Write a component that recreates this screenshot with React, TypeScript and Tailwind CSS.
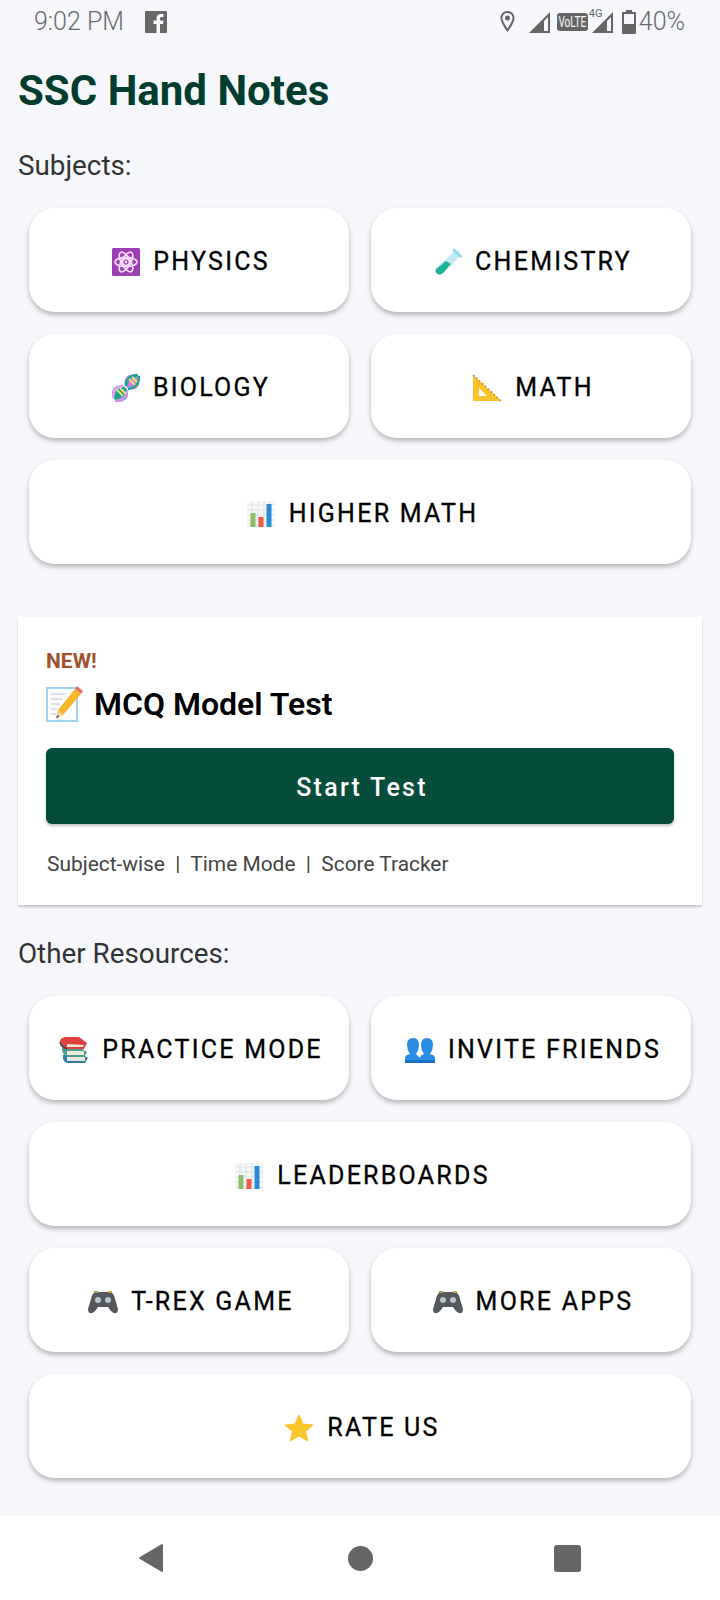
import { ReactNode } from 'react';

const Atom = () => (
  <svg viewBox="0 0 28 28" className="w-[28px] h-[28px]">
    <rect width="28" height="28" rx="1.5" fill="#9c3fb5" />
    <g fill="none" stroke="#f6dcf9" strokeWidth="1.7">
      <ellipse cx="14" cy="14" rx="11" ry="4.6" transform="rotate(60 14 14)" />
      <ellipse cx="14" cy="14" rx="11" ry="4.6" transform="rotate(-60 14 14)" />
      <ellipse cx="14" cy="14" rx="11" ry="4.6" />
      <circle cx="14" cy="14" r="3.4" />
    </g>
    <circle cx="14" cy="14" r="1.4" fill="#f6dcf9" />
  </svg>
);

const TestTube = () => (
  <svg viewBox="0 0 28 28" className="w-[28px] h-[28px]">
    <path d="M21 3 L26 8 L9 25 Q5 28 2.500 25 Q0 22 3.500 19 Z" fill="#bdeaf2" />
    <path d="M12 13 L17 16 L9 25 Q5 28 2.500 25 Q0 22 3.500 20 Z" fill="#1fb39a" />
    <path d="M20 2 L27 8.500" stroke="#8fd7ee" strokeWidth="2.500" strokeLinecap="round" />
    <circle cx="24" cy="3" r="1" fill="#bde7f5" />
  </svg>
);

const Dna = () => (
  <svg viewBox="0 0 28 28" className="w-[28px] h-[28px]">
    <circle cx="8" cy="19.500" r="8" fill="#17a78f" />
    <circle cx="20" cy="8" r="7.500" fill="#d27de8" />
    <path d="M1 24 Q1 13 11 12" fill="none" stroke="#e39df3" strokeWidth="3" />
    <path d="M3 27 Q14 27 15 17" fill="none" stroke="#d98cf0" strokeWidth="3" />
    <path d="M14 12 Q14 2 26 1" fill="none" stroke="#18a890" strokeWidth="3" />
    <path d="M27 2 Q27 14 16 15" fill="none" stroke="#18a890" strokeWidth="2.500" />
    <path d="M5 16 L11 22 M8 14 L14 20 M17 5 L23 11 M20 3 L25 8" stroke="#f1e36b" strokeWidth="1.800" />
  </svg>
);

const Ruler = () => (
  <svg viewBox="0 0 30 28" className="w-[30px] h-[28px]">
    <path d="M1 1 L29 27 L1 27 Z" fill="#f9c22e" />
    <path d="M7 14 L15 22 L7 22 Z" fill="#ffffff" />
    <path d="M1 1 L29 27" stroke="#c78d14" strokeWidth="1.500" strokeDasharray="2 2" />
  </svg>
);

const BarChart = () => (
  <svg viewBox="0 0 30 28" className="w-[30px] h-[28px]">
    <rect x="1" y="1" width="28" height="26" fill="#f7f8f9" />
    <path d="M1 5 H29 M1 10 H29 M1 15 H29 M1 20 H29 M1 25 H29 M6 1 V27 M12 1 V27 M18 1 V27 M24 1 V27" stroke="#d6dde3" strokeWidth="0.800" />
    <rect x="4.500" y="13" width="5" height="14" fill="#8cbd67" />
    <rect x="12.500" y="17" width="5" height="10" fill="#ee5a45" />
    <rect x="20.500" y="4" width="5" height="23" fill="#2a8ad8" />
  </svg>
);

const Books = () => (
  <svg viewBox="0 0 30 28" className="w-[30px] h-[28px]">
    <path d="M4 19 L22 18 L29 22 L26 27 L8 27 Q3 25 4 19 Z" fill="#2f7fa8" />
    <path d="M8 21 L26 21 L26 25 L8 25 Z" fill="#e9e5d8" />
    <path d="M3 12 L20 11 L28 16 L25 21 L8 21 Q3 18 3 12 Z" fill="#4a9e8c" />
    <path d="M8 15 L25 15 L25 19 L8 19 Z" fill="#ecebdf" />
    <path d="M1 6 Q1 2 6 1 L20 1 L28 7 L25 13 L8 13 Q1 12 1 6 Z" fill="#e2403c" />
    <path d="M8 8 L25 9 L24 11 L8 11 Z" fill="#f2e9e0" />
    <path d="M1 6 Q2 11 8 13" fill="none" stroke="#3c4a55" strokeWidth="1.500" />
  </svg>
);

const People = () => (
  <svg viewBox="0 0 30 28" className="w-[30px] h-[28px]">
    <path d="M0 27 V22 Q0 19 5 18 Q2 14 2 9 Q2 2 8 2 Q14 2 14 9 Q14 14 11 18 L15 22 V27 Z" fill="#2a8ce3" />
    <path d="M15 27 V22 Q15 19 19 18 Q16 14 16 9 Q16 2 22 2 Q28 2 28 9 Q28 14 25 18 Q30 19 30 22 V27 Z" fill="#2a8ce3" />
    <path d="M0 24 H30 V27 H0 Z" fill="#1b70c4" />
  </svg>
);

const Gamepad = () => (
  <svg viewBox="0 0 30 28" className="w-[30px] h-[28px]">
    <path d="M8 4 H22 Q26 5 27 11 L30 21 Q30 26 26 25 Q23 24 20 19 H10 Q7 24 4 25 Q0 26 0 21 L3 11 Q4 5 8 4 Z" fill="#55595e" />
    <circle cx="10" cy="12" r="3" fill="#b9c4cc" />
    <circle cx="20" cy="12" r="3" fill="#b9c4cc" />
    <rect x="6" y="3" width="4" height="2" fill="#9aa54f" />
    <rect x="20" y="3" width="4" height="2" fill="#c9a73c" />
  </svg>
);

const Star = () => (
  <svg viewBox="0 0 30 28" className="w-[30px] h-[28px]">
    <path d="M15 1 L19 10 L29 11 L21.500 17.500 L24 27 L15 22 L6 27 L8.500 17.500 L1 11 L11 10 Z" fill="#fbc52d" stroke="#fbc52d" strokeLinejoin="round" />
  </svg>
);

const Memo = () => (
  <svg viewBox="0 0 38 38" className="w-[38px] h-[38px]">
    <rect x="1" y="3" width="30" height="33" fill="#fbfdff" stroke="#9fd3f2" strokeWidth="2" />
    <path d="M5 9 H20 M5 14 H16 M5 19 H14 M5 24 H11 M5 29 H10" stroke="#b9c2c8" strokeWidth="1" />
    <path d="M31 1 L37 6 L35 9 L29 4 Z" fill="#e56f6f" />
    <path d="M29 4 L35 9 L17 30 L10 33 L12 25 Z" fill="#f9b72c" />
    <path d="M12 25 L17 30 L10 33 Z" fill="#f3d6a7" />
    <path d="M12 30 L10 33 L13 32 Z" fill="#333" />
  </svg>
);

const Signal = () => (
  <svg viewBox="0 0 22 21" className="w-[22px] h-[21px]">
    <path fillRule="evenodd" d="M0 21 L21 0 V21 Z M15 9 V19 H19 V5 Z" fill="#666" />
  </svg>
);

function MenuButton({ icon, label }: { icon: ReactNode; label: string }) {
  return (
    <div className="h-[104px] flex-1 flex items-center justify-center gap-[13px] rounded-[26px] bg-white pl-[4px] pt-[4px] shadow-[0_3px_5px_rgba(0,0,0,0.26)]">
      {icon}
      <span className="text-[25px] font-normal tracking-[0.09em] text-black [-webkit-text-stroke:0.3px_black]">{label}</span>
    </div>
  );
}

export default function App() {
  return (
    <div className="w-[720px] h-[1600px] flex flex-col bg-[#f5f7fb] font-['Roboto',sans-serif]">
      {/* Status bar */}
      <div className="h-[44px] shrink-0 flex items-center pl-[34px] pr-[35px] text-[#6b6b6b]">
        <span className="text-[25px] font-light">9:02 PM</span>
        <svg viewBox="0 0 22 22" className="ml-[21px] w-[22px] h-[22px]">
          <rect width="22" height="22" rx="1" fill="#666" />
          <path d="M15 22 V13 H18 L18.500 9.500 H15 V7.500 Q15 6 16.500 6 H18.500 V3 H16 Q11.500 3 11.500 7.500 V9.500 H8.500 V13 H11.500 V22 Z" fill="#f5f7fb" />
        </svg>
        <div className="flex-1" />
        <svg viewBox="0 0 14 22" className="w-[17px] h-[22px] mr-[13px]">
          <path fillRule="evenodd" d="M7 0 C3 0 0 3 0 7 C0 12 7 21 7 21 C7 21 14 12 14 7 C14 3 11 0 7 0 Z M7 2 C10 2 12 4 12 7 C12 10 9 14.500 7 17.500 C5 14.500 2 10 2 7 C2 4 4 2 7 2 Z" fill="#666" />
          <circle cx="7" cy="7" r="2.500" fill="#666" />
        </svg>
        <Signal />
        <div className="ml-[6px] h-[18px] w-[31px] flex items-center justify-center overflow-hidden rounded-[3px] bg-[#666]">
          <span className="inline-block scale-x-[0.72] text-[14px] leading-none text-[#f5f7fb]">VoLTE</span>
        </div>
        <div className="relative ml-[4px]">
          <span className="absolute left-[-3px] top-[-5px] text-[11px] leading-[13px] text-[#666]">4G</span>
          <Signal />
        </div>
        <svg viewBox="0 0 14 24" className="ml-[8px] w-[14px] h-[24px]">
          <path fillRule="evenodd" d="M4 0 H10 V2 H13 Q14 2 14 3 V23 Q14 24 13 24 H1 Q0 24 0 23 V3 Q0 2 1 2 H4 Z M2 4 V14 H12 V4 Z" fill="#666" />
        </svg>
        <span className="ml-[3px] text-[25px] font-light">40%</span>
      </div>

      {/* Header */}
      <h1 className="mt-[24px] pl-[18px] text-[42px] leading-[46px] font-bold text-[#003d2e]">SSC Hand Notes</h1>
      <p className="mt-[36px] pl-[18px] text-[27.8px] leading-[32px] text-[#333]">Subjects:</p>

      {/* Subject buttons */}
      <div className="mt-[26px] px-[29px] flex flex-col gap-[22px]">
        <div className="flex gap-[22px]">
          <MenuButton icon={<Atom />} label="PHYSICS" />
          <MenuButton icon={<TestTube />} label="CHEMISTRY" />
        </div>
        <div className="flex gap-[22px]">
          <MenuButton icon={<Dna />} label="BIOLOGY" />
          <MenuButton icon={<Ruler />} label="MATH" />
        </div>
        <div className="flex">
          <MenuButton icon={<BarChart />} label="HIGHER MATH" />
        </div>
      </div>

      {/* MCQ card */}
      <div className="mt-[53px] mx-[18px] h-[288px] shrink-0 bg-white px-[28px] pt-[32px] shadow-[0_2px_2px_rgba(0,0,0,0.2)]">
        <div className="text-[21px] leading-[24px] font-bold text-[#a0522d]">NEW!</div>
        <div className="mt-[12px] flex items-center gap-[10px]">
          <Memo />
          <span className="text-[32px] leading-[38px] font-semibold text-black">MCQ Model Test</span>
        </div>
        <div className="mt-[25px] h-[76px] pl-[4px] pt-[3px] flex items-center justify-center rounded-[6px] bg-[#054d3a] text-[25px] font-medium tracking-[0.09em] text-white shadow-[0_2px_3px_rgba(0,0,0,0.25)]">Start Test</div>
        <div className="mt-[27px] pl-[1px] text-[20.9px] leading-[26px] text-[#444] whitespace-pre">Subject-wise  |  Time Mode  |  Score Tracker</div>
      </div>

      <p className="mt-[33px] pl-[18px] text-[27.8px] leading-[32px] text-[#333]">Other Resources:</p>

      {/* Other buttons */}
      <div className="mt-[26px] px-[29px] flex flex-col gap-[22px]">
        <div className="flex gap-[22px]">
          <MenuButton icon={<Books />} label="PRACTICE MODE" />
          <MenuButton icon={<People />} label="INVITE FRIENDS" />
        </div>
        <div className="flex">
          <MenuButton icon={<BarChart />} label="LEADERBOARDS" />
        </div>
        <div className="flex gap-[22px]">
          <MenuButton icon={<Gamepad />} label="T-REX GAME" />
          <MenuButton icon={<Gamepad />} label="MORE APPS" />
        </div>
        <div className="flex">
          <MenuButton icon={<Star />} label="RATE US" />
        </div>
      </div>

      {/* Nav bar */}
      <div className="mt-auto h-[84px] shrink-0 bg-white flex items-center justify-between pl-[138px] pr-[139px]">
        <svg viewBox="0 0 26 30" className="w-[26px] h-[30px]">
          <path d="M24 2 V28 L2 15 Z" fill="#666" stroke="#666" strokeWidth="2" strokeLinejoin="round" />
        </svg>
        <div className="ml-[2px] w-[25px] h-[25px] rounded-full bg-[#666]" />
        <div className="w-[27px] h-[27px] rounded-[3px] bg-[#666]" />
      </div>
    </div>
  );
}
